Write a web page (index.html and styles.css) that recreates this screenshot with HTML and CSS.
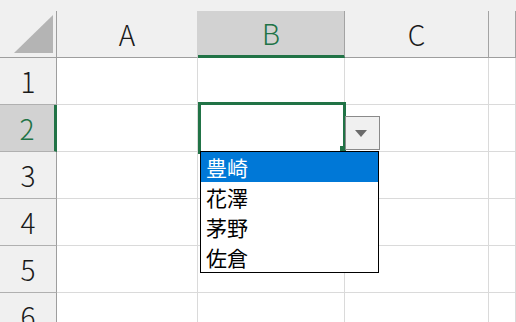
FILE: index.html
```html
<!DOCTYPE html>
<html lang="ja">
<head>
    <meta charset="UTF-8">
    <title>Excel Dropdown</title>
    <link rel="stylesheet" href="styles.css">
</head>
<body>
    <div class="sheet">
        <div class="top-band"></div>
        <div class="grid">
            <!-- column headers -->
            <div class="corner">
                <svg width="57" height="47" viewBox="0 0 57 47">
                    <polygon points="14,42 53,42 53,4" fill="#b4b4b4"/>
                </svg>
            </div>
            <div class="col-head before-active">A</div>
            <div class="col-head active">B</div>
            <div class="col-head">C</div>
            <div class="col-head"></div>

            <div class="row-head">1</div>
            <div class="cell"></div><div class="cell"></div><div class="cell"></div><div class="cell"></div>

            <div class="row-head active">2</div>
            <div class="cell"></div><div class="cell"></div><div class="cell"></div><div class="cell"></div>

            <div class="row-head">3</div>
            <div class="cell"></div><div class="cell"></div><div class="cell"></div><div class="cell"></div>

            <div class="row-head">4</div>
            <div class="cell"></div><div class="cell"></div><div class="cell"></div><div class="cell"></div>

            <div class="row-head">5</div>
            <div class="cell"></div><div class="cell"></div><div class="cell"></div><div class="cell"></div>

            <div class="row-head">6</div>
            <div class="cell"></div><div class="cell"></div><div class="cell"></div><div class="cell"></div>
        </div>

        <!-- selected cell B2 with its validation dropdown -->
        <div class="selection"></div>
        <div class="fill-handle"></div>
        <div class="dd-button"><span class="arrow"></span></div>
        <ul class="dd-list">
            <li class="selected">豊崎</li>
            <li>花澤</li>
            <li>茅野</li>
            <li>佐倉</li>
        </ul>
    </div>
</body>
</html>
```

FILE: styles.css
```css
body {
    margin: 0;
    overflow: hidden;
    background-color: #fff;
    font-family: "Noto Sans CJK JP", "Noto Sans", sans-serif;
}

.sheet {
    position: relative;
    width: 516px;
    height: 322px;
    overflow: hidden;
}

.top-band {
    height: 11px;
    background-color: #f0f0f0;
}

.grid {
    display: grid;
    grid-template-columns: 57px 141px 147px 144px 1fr;
    grid-template-rows: repeat(7, 47px);
}

.grid > div {
    box-sizing: border-box;
}

.corner {
    background-color: #f0f0f0;
    border-right: 1px solid #9e9e9e;
    border-bottom: 1px solid #9e9e9e;
}

.corner svg {
    display: block;
}

.col-head {
    display: flex;
    align-items: center;
    justify-content: center;
    background-color: #f0f0f0;
    border-right: 1px solid #a3a3a3;
    border-bottom: 1px solid #9e9e9e;
    font-size: 28px;
    font-weight: 300;
    color: #1a1a1a;
}

.col-head.before-active {
    border-right-color: #d2d2d2;
}

.col-head.active {
    background-color: #d2d2d2;
    color: #217346;
    border-bottom: 3px solid #217346;
}

.row-head {
    display: flex;
    align-items: center;
    justify-content: center;
    background-color: #f0f0f0;
    border-right: 1px solid #9e9e9e;
    border-bottom: 1px solid #b0b0b0;
    font-size: 28px;
    font-weight: 300;
    color: #1a1a1a;
}

.row-head.active {
    background-color: #d2d2d2;
    color: #217346;
    border-right: 3px solid #217346;
}

.cell {
    border-right: 1px solid #dadada;
    border-bottom: 1px solid #dadada;
}

/* selection box and dropdown sit over the grid */
.selection {
    position: absolute;
    left: 198px;
    top: 102px;
    width: 148px;
    height: 52px;
    box-sizing: border-box;
    border: 3px solid #217346;
}

.fill-handle {
    position: absolute;
    left: 340px;
    top: 146px;
    width: 6px;
    height: 6px;
    background-color: #217346;
}

.dd-button {
    position: absolute;
    left: 345px;
    top: 116px;
    width: 35px;
    height: 34px;
    box-sizing: border-box;
    border: 1px solid #8a8a8a;
    background-color: #f0f0f0;
    display: flex;
    align-items: center;
    justify-content: center;
}

.arrow {
    width: 0;
    height: 0;
    margin-right: 4px;
    border-left: 6.5px solid transparent;
    border-right: 6.5px solid transparent;
    border-top: 7px solid #6b6b6b;
}

.dd-list {
    position: absolute;
    left: 200px;
    top: 151px;
    width: 179px;
    margin: 0;
    padding: 0;
    list-style: none;
    box-sizing: border-box;
    border: 1px solid #000;
    background-color: #fff;
    z-index: 2;
}

.dd-list li {
    height: 30px;
    line-height: 30px;
    padding-left: 5px;
    font-size: 21px;
    color: #000;
}

.dd-list li.selected {
    background-color: #0078d7;
    color: #fff;
}
```
